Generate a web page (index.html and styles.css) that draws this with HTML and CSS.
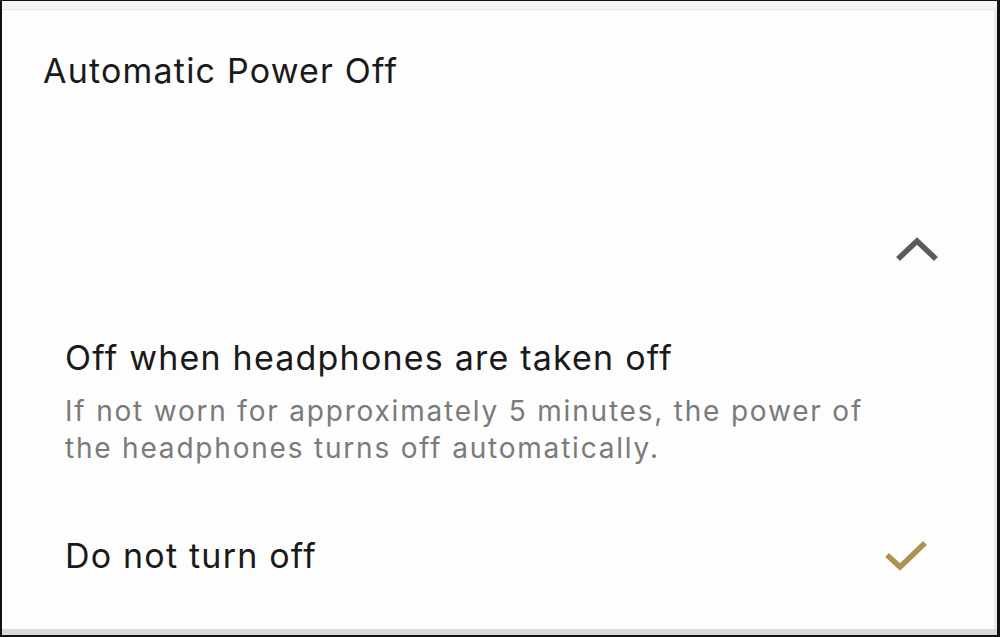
FILE: index.html
```html
<!DOCTYPE html>
<html lang="en">
<head>
  <meta charset="UTF-8">
  <title>Automatic Power Off</title>
  <link rel="stylesheet" href="styles.css">
</head>
<body>
  <div class="frame">
    <div class="top-strip"></div>
    <div class="panel">
      <h1 class="title">Automatic Power Off</h1>
      <div class="toggle-row">
        <svg class="chevron" width="44" height="30" viewBox="0 0 44 30">
          <polyline points="3,26 22,8 41,26" fill="none" stroke="#5b5b5b" stroke-width="5.5"/>
        </svg>
      </div>
      <div class="option first">
        <div class="option-text">
          <div class="option-name">Off when headphones are taken off</div>
          <div class="option-desc">If not worn for approximately 5 minutes, the power of the headphones turns off automatically.</div>
        </div>
      </div>
      <div class="option selected">
        <div class="option-text">
          <div class="option-name">Do not turn off</div>
        </div>
        <svg class="check" width="44" height="36" viewBox="0 0 44 36">
          <polyline points="3,17 16,29 41,5" fill="none" stroke="#b0924f" stroke-width="5.5"/>
        </svg>
      </div>
    </div>
    <div class="bottom-strip"></div>
  </div>
</body>
</html>
```

FILE: styles.css
```css
html, body {
  margin: 0;
  background: #fff;
}
.frame {
  box-sizing: border-box;
  width: 1000px;
  height: 637px;
  border-top: 1px solid #111;
  border-left: 2px solid #111;
  border-right: 3px solid #111;
  border-bottom: 2px solid #111;
  display: flex;
  flex-direction: column;
  font-family: Inter, "Open Sans", sans-serif;
  color: #1a1a1a;
}
.top-strip {
  height: 8px;
  background: #f4f4f4;
  border-bottom: 1px solid #e6e6e6;
}
.panel {
  flex: 1;
  background: #fdfdfd;
  border-right: 3px solid #ececec;
}
.title {
  margin: 0;
  padding: 41px 0 0 41px;
  font-size: 34px;
  font-weight: normal;
  line-height: 40px;
  letter-spacing: 1.2px;
}
.toggle-row {
  display: flex;
  justify-content: flex-end;
  padding: 142px 55px 0 0;
  height: 30px;
}
.option {
  display: flex;
  align-items: center;
  padding: 0 66px 0 63px;
}
.option-text {
  flex: 1;
}
.option-name {
  font-size: 34px;
  line-height: 44px;
  letter-spacing: 1.2px;
}
.option-desc {
  margin-top: 13px;
  font-size: 28px;
  line-height: 37px;
  letter-spacing: 1.8px;
  color: #7a7a7a;
  max-width: 830px;
}
.first {
  margin-top: 73px;
}
.selected {
  margin-top: 67px;
}
.bottom-strip {
  height: 6px;
  background: #d9d9d9;
}
```
